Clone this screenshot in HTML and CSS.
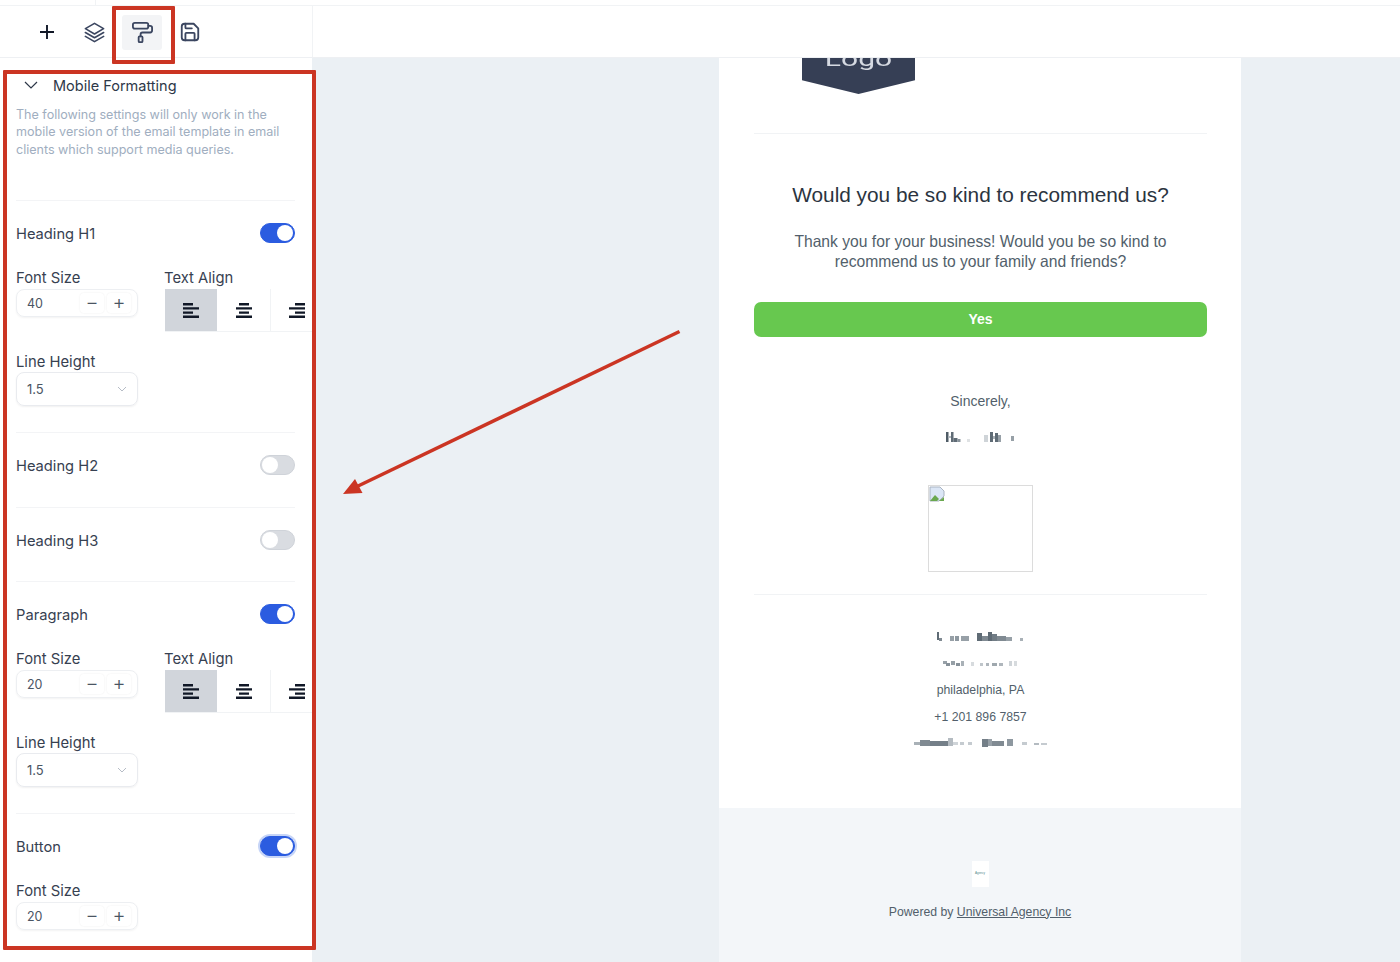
FILE: index.html
```html
<!DOCTYPE html>
<html lang="en">
  <head>
    <meta charset="UTF-8" />
    <meta name="viewport" content="width=device-width, initial-scale=1.0" />
    <title>Mobile Formatting</title>
    <link rel="stylesheet" href="styles.css">
  </head>
  <body>
    <div class="top-strip"><span class="strip-cell"></span></div>

    <header class="topbar">
      <nav class="toolbar">
        <button class="tool tool-plus">
          <svg viewBox="0 0 18 18" width="18" height="18"><path d="M9 2v14M2 9h14" stroke="#111827" stroke-width="1.9" fill="none"/></svg>
        </button>
        <button class="tool">
          <svg viewBox="0 0 24 24" width="23" height="23" fill="none" stroke="#3b4660" stroke-width="1.7" stroke-linejoin="round" stroke-linecap="round"><path d="M12 2.5 21.5 8 12 13.5 2.500 8z"/><path d="M2.500 12 12 17.500 21.500 12"/><path d="M2.500 16 12 21.500 21.500 16"/></svg>
        </button>
        <button class="tool tool-active">
          <svg viewBox="0 0 24 24" width="23" height="23" fill="none" stroke="#3b4660" stroke-width="1.9" stroke-linejoin="round" stroke-linecap="round"><rect x="2" y="2" width="16" height="6" rx="2"/><path d="M10 16v-2a2 2 0 0 1 2-2h8a2 2 0 0 0 2-2V7a2 2 0 0 0-2-2h-2"/><rect x="8" y="16" width="4" height="6" rx="1"/></svg>
        </button>
        <button class="tool">
          <svg viewBox="0 0 24 24" width="22" height="22" fill="none" stroke="#3b4660" stroke-width="2" stroke-linejoin="round" stroke-linecap="round"><path d="M6 3h10l5 5v10a3 3 0 0 1-3 3H6a3 3 0 0 1-3-3V6a3 3 0 0 1 3-3z"/><path d="M7 21v-7a1 1 0 0 1 1-1h8a1 1 0 0 1 1 1v7"/><path d="M7 3v4a1 1 0 0 0 1 1h6"/></svg>
        </button>
      </nav>
    </header>

    <main class="workspace">
      <aside class="sidebar">
        <div class="intro">
          <div class="intro-title">
            <svg viewBox="0 0 14 8" width="14" height="8"><path d="M1 1l6 6 6-6" stroke="#2d3748" stroke-width="1.2" fill="none"/></svg>
            <span>Mobile Formatting</span>
          </div>
          <p class="intro-text">The following settings will only work in the mobile version of the email template in email clients which support media queries.</p>
        </div>

        <section class="setting">
          <div class="setting-row">
            <span class="setting-name">Heading H1</span>
            <span class="toggle toggle-on"></span>
          </div>
          <div class="fields">
            <div class="field">
              <label>Font Size</label>
              <div class="stepper">
                <span class="stepper-value">40</span>
                <span class="step">&minus;</span>
                <span class="step">+</span>
              </div>
            </div>
            <div class="field">
              <label>Text Align</label>
              <div class="align-group">
                <span class="align align-active"><svg viewBox="0 0 16 15" width="16" height="15"><path d="M0 1.200h10M0 5.400h16M0 9.600h10M0 13.800h16"/></svg></span>
                <span class="align"><svg viewBox="0 0 16 15" width="16" height="15"><path d="M3 1.200h10M0 5.400h16M3 9.600h10M0 13.800h16"/></svg></span>
                <span class="align"><svg viewBox="0 0 16 15" width="16" height="15"><path d="M6 1.200h10M0 5.400h16M6 9.600h10M0 13.800h16"/></svg></span>
              </div>
            </div>
            <div class="field">
              <label>Line Height</label>
              <div class="select">
                <span>1.5</span>
                <svg viewBox="0 0 10 6" width="10" height="6"><path d="M1 1l4 4 4-4" stroke="#b6bcc6" stroke-width="1" fill="none"/></svg>
              </div>
            </div>
          </div>
        </section>

        <section class="setting">
          <div class="setting-row">
            <span class="setting-name">Heading H2</span>
            <span class="toggle"></span>
          </div>
        </section>

        <section class="setting">
          <div class="setting-row">
            <span class="setting-name">Heading H3</span>
            <span class="toggle"></span>
          </div>
        </section>

        <section class="setting">
          <div class="setting-row">
            <span class="setting-name">Paragraph</span>
            <span class="toggle toggle-on"></span>
          </div>
          <div class="fields">
            <div class="field">
              <label>Font Size</label>
              <div class="stepper">
                <span class="stepper-value">20</span>
                <span class="step">&minus;</span>
                <span class="step">+</span>
              </div>
            </div>
            <div class="field">
              <label>Text Align</label>
              <div class="align-group">
                <span class="align align-active"><svg viewBox="0 0 16 15" width="16" height="15"><path d="M0 1.200h10M0 5.400h16M0 9.600h10M0 13.800h16"/></svg></span>
                <span class="align"><svg viewBox="0 0 16 15" width="16" height="15"><path d="M3 1.200h10M0 5.400h16M3 9.600h10M0 13.800h16"/></svg></span>
                <span class="align"><svg viewBox="0 0 16 15" width="16" height="15"><path d="M6 1.200h10M0 5.400h16M6 9.600h10M0 13.800h16"/></svg></span>
              </div>
            </div>
            <div class="field">
              <label>Line Height</label>
              <div class="select">
                <span>1.5</span>
                <svg viewBox="0 0 10 6" width="10" height="6"><path d="M1 1l4 4 4-4" stroke="#b6bcc6" stroke-width="1" fill="none"/></svg>
              </div>
            </div>
          </div>
        </section>

        <section class="setting">
          <div class="setting-row">
            <span class="setting-name">Button</span>
            <span class="toggle toggle-on toggle-focus"></span>
          </div>
          <div class="fields">
            <div class="field">
              <label>Font Size</label>
              <div class="stepper">
                <span class="stepper-value">20</span>
                <span class="step">&minus;</span>
                <span class="step">+</span>
              </div>
            </div>
          </div>
        </section>
      </aside>

      <div class="canvas">
        <article class="email">
          <div class="email-body">
            <div class="logo"><span>Logo</span></div>
            <hr class="rule" />
            <h2 class="email-title">Would you be so kind to recommend us?</h2>
            <p class="email-text">Thank you for your business! Would you be so kind to recommend us to your family and friends?</p>
            <a class="yes-button">Yes</a>
            <p class="sign-off">Sincerely,</p>
            <!-- blurred out name -->
            <svg class="redacted redacted-name" viewBox="0 0 70 12" width="70" height="12">
              <rect x="0" y="1" width="2.500" height="10" fill="#4f5c66"/><rect x="2.500" y="5" width="2.500" height="2" fill="#b4bbc1"/><rect x="5" y="1" width="2.500" height="10" fill="#5f6b75"/><rect x="7.500" y="7" width="4" height="4" fill="#5f6b75"/><rect x="11.500" y="8" width="3" height="3" fill="#8a949c"/><rect x="21" y="8" width="3" height="3" fill="#dfe2e4"/><rect x="38" y="4" width="4" height="7" fill="#cfd4d8"/><rect x="44" y="1" width="3" height="10" fill="#5f6b75"/><rect x="47" y="5" width="2" height="3" fill="#a9b1b7"/><rect x="49" y="2" width="3" height="9" fill="#5f6b75"/><rect x="52" y="4" width="3" height="7" fill="#97a0a7"/><rect x="65" y="5" width="3" height="5" fill="#97a0a7"/>
            </svg>
            <div class="image-box">
              <svg viewBox="0 0 16 16" width="16" height="16"><path d="M1 1h10l4 4v5l-5 5H1z" fill="#dbe6f6" stroke="#aab4c2" stroke-width="1"/><path d="M1 15l5-6 4 4-2 2z" fill="#6aa84f"/><path d="M15 11l-5 4h5z" fill="#6aa84f"/></svg>
            </div>
            <hr class="rule rule-lower" />
            <div class="contact">
              <!-- blurred out company + street -->
              <svg class="redacted" viewBox="0 0 90 12" width="90" height="12">
                <rect x="1" y="1" width="2" height="8" fill="#5f6b75"/><rect x="3" y="7" width="3" height="3" fill="#808a92"/><rect x="14" y="5" width="4" height="5" fill="#97a0a7"/><rect x="19" y="5" width="4" height="5" fill="#8e98a0"/><rect x="25" y="5" width="8" height="5" fill="#97a0a7"/><rect x="41" y="2" width="5" height="8" fill="#5f6b75"/><rect x="46" y="5" width="6" height="5" fill="#808a92"/><rect x="52" y="1" width="4" height="9" fill="#5f6b75"/><rect x="56" y="3" width="5" height="7" fill="#717c85"/><rect x="61" y="5" width="9" height="5" fill="#808a92"/><rect x="70" y="6" width="6" height="4" fill="#97a0a7"/><rect x="84" y="7" width="3" height="3" fill="#a9b1b7"/>
              </svg>
              <svg class="redacted" viewBox="0 0 76 12" width="76" height="12">
                <rect x="0" y="3" width="4" height="3" fill="#98a1a8"/><rect x="3" y="5" width="4" height="3" fill="#88929a"/><rect x="8" y="3" width="4" height="4" fill="#97a0a7"/><rect x="13" y="5" width="4" height="3" fill="#88929a"/><rect x="18" y="3" width="3" height="5" fill="#a9b1b7"/><rect x="28" y="4" width="3" height="4" fill="#d7dbde"/><rect x="37" y="5" width="3" height="3" fill="#bfc5ca"/><rect x="43" y="5" width="3" height="3" fill="#afb6bc"/><rect x="49" y="5" width="5" height="3" fill="#9fa8ae"/><rect x="56" y="5" width="4" height="3" fill="#afb6bc"/><rect x="66" y="3" width="3" height="5" fill="#cfd4d8"/><rect x="71" y="3" width="3" height="5" fill="#d7dbde"/>
              </svg>
              <span class="contact-line">philadelphia, PA</span>
              <span class="contact-line">+1 201 896 7857</span>
              <svg class="redacted" viewBox="0 0 134 12" width="134" height="12">
                <rect x="0" y="5" width="8" height="3" fill="#a9b1b7"/><rect x="6" y="3" width="10" height="6" fill="#808a92"/><rect x="16" y="4" width="18" height="5" fill="#747f88"/><rect x="34" y="1" width="5" height="8" fill="#b4bbc1"/><rect x="39" y="5" width="5" height="3" fill="#cfd4d8"/><rect x="46" y="5" width="4" height="3" fill="#c5cbd0"/><rect x="54" y="5" width="4" height="3" fill="#c5cbd0"/><rect x="68" y="2" width="6" height="8" fill="#747f88"/><rect x="74" y="2" width="4" height="7" fill="#97a0a7"/><rect x="78" y="4" width="12" height="5" fill="#808a92"/><rect x="93" y="2" width="6" height="7" fill="#8e98a0"/><rect x="108" y="5" width="5" height="3" fill="#c5cbd0"/><rect x="120" y="6" width="5" height="2" fill="#b4bbc1"/><rect x="127" y="6" width="6" height="2" fill="#c5cbd0"/>
              </svg>
            </div>
          </div>
          <footer class="email-footer">
            <div class="footer-logo"><span>Agency</span></div>
            <p class="powered">Powered by <a>Universal Agency Inc</a></p>
          </footer>
        </article>
      </div>
    </main>

    <!-- annotations drawn over the screenshot -->
    <div class="mark mark-tool"></div>
    <div class="mark mark-panel"></div>
    <svg class="mark-arrow" viewBox="0 0 1400 962" width="1400" height="962">
      <path d="M679.500 331.500 356 487" stroke="#cb3523" stroke-width="3.500" fill="none"/>
      <path d="M343 494 355 479 362.500 493z" fill="#cb3523"/>
    </svg>
  </body>
</html>
```

FILE: styles.css
```css
* {
  box-sizing: border-box;
  margin: 0;
  padding: 0;
}

body {
  width: 1400px;
  height: 962px;
  overflow: hidden;
  position: relative;
  background: #fff;
  font-family: Inter, "Liberation Sans", sans-serif;
  color: #374151;
}

.top-strip {
  height: 6px;
  border-bottom: 1px solid #f1f3f5;
}

.strip-cell {
  display: block;
  width: 96px;
  height: 5px;
  border-right: 1px solid #f1f3f5;
}

.topbar {
  height: 52px;
  border-bottom: 1px solid #eef0f3;
}

.toolbar {
  width: 313px;
  height: 51px;
  display: flex;
  align-items: center;
  padding: 1px 0 0 26px;
  gap: 8px;
  border-right: 1px solid #f1f3f5;
}

.tool {
  width: 40px;
  height: 35px;
  padding: 0;
  border: none;
  border-radius: 3px;
  background: transparent;
  display: flex;
  align-items: center;
  justify-content: center;
}

.tool-plus svg,
.tool-active svg {
  margin-left: 1px;
}

.tool-active {
  background: #f3f4f6;
}

.workspace {
  display: flex;
  height: 904px;
}

.sidebar {
  width: 312px;
  flex: none;
  overflow: hidden;
  background: #fff;
}

.intro {
  padding: 17px 16px 0;
  height: 142px;
}

.intro-title {
  display: flex;
  align-items: center;
  height: 20px;
  padding-left: 8px;
  gap: 15px;
  font-size: 14.500px;
  color: #2d3748;
}

.intro-text {
  margin-top: 10.500px;
  font-size: 12.550px;
  line-height: 17.500px;
  color: #a0aec0;
}

.setting {
  margin-left: 16px;
  width: 279px;
  padding: 22px 0 31.500px;
  border-top: 1px solid #f3f4f6;
}

.setting:has(.fields) {
  padding-bottom: 26px;
}

.setting-row {
  display: flex;
  justify-content: space-between;
  align-items: center;
  height: 20px;
}

.setting-name {
  padding-top: 2px;
  font-size: 14.700px;
  color: #374151;
}

.toggle {
  width: 35px;
  height: 20px;
  border-radius: 10px;
  background: #d9dce1;
  border: 1px solid #cfd3d9;
  position: relative;
}

.toggle::after {
  content: "";
  position: absolute;
  left: 1px;
  top: 1px;
  width: 16px;
  height: 16px;
  border-radius: 50%;
  background: #fff;
}

.toggle-on {
  background: #2b5ce0;
  border-color: #2b5ce0;
}

.toggle-on::after {
  left: 16px;
}

.toggle-focus {
  box-shadow: 0 0 0 2px #c7d5f7;
}

.fields {
  margin-top: 25px;
  display: grid;
  grid-template-columns: 122px 200px;
  column-gap: 27px;
  row-gap: 20px;
}

.field label {
  display: block;
  height: 18px;
  line-height: 20px;
  margin-bottom: 3px;
  font-size: 14.800px;
  color: #374151;
}

.field:nth-child(2) label {
  margin-left: -1px;
}

.stepper {
  height: 28px;
  display: flex;
  align-items: center;
  gap: 3px;
  padding: 0 6px 0 10px;
  border: 1px solid #edeff2;
  border-radius: 8px;
  box-shadow: 0 1px 2px rgba(0, 0, 0, 0.05);
  font-size: 12.500px;
  color: #4b5563;
}

.stepper-value {
  flex: 1;
}

.step {
  width: 24px;
  height: 20px;
  line-height: 19px;
  text-align: center;
  font-size: 20px;
  font-weight: 300;
  border-radius: 4px;
  box-shadow: 0 0 2px rgba(0, 0, 0, 0.08);
  color: #4b5563;
}

.align-group {
  display: flex;
  height: 43px;
  border-bottom: 1px solid #f1f3f5;
}

.align {
  width: 53px;
  flex: none;
  display: flex;
  align-items: center;
  justify-content: center;
  border-right: 1px solid #f1f3f5;
}

.align svg {
  fill: none;
  stroke: #111827;
  stroke-width: 2.400;
}

.align-active {
  background: #d1d5db;
  border-right-color: #fff;
}

.select {
  height: 34px;
  margin-top: -1px;
  display: flex;
  align-items: center;
  justify-content: space-between;
  padding: 0 10px;
  border: 1px solid #e9ebef;
  border-radius: 8px;
  box-shadow: 0 1px 2px rgba(0, 0, 0, 0.06);
  font-size: 13px;
  color: #4b5563;
}

.canvas {
  flex: 1;
  background: #ebf0f4;
  overflow: hidden;
}

.email {
  width: 522px;
  height: 904px;
  margin-left: 407px;
  background: #fff;
  font-family: "Liberation Sans", Arial, sans-serif;
  color: #525f6b;
  display: flex;
  flex-direction: column;
}

.email-body {
  padding: 0 34px 0 35px;
  text-align: center;
}

.logo {
  width: 113px;
  height: 36px;
  margin: 0 0 39px 48px;
  background: #363f55;
  clip-path: polygon(0 0, 100% 0, 100% 62%, 50% 100%, 0 62%);
  color: #d6dae2;
  font-family: Roboto, sans-serif;
  font-size: 20px;
  overflow: hidden;
}

.logo span {
  display: block;
  line-height: 0;
  margin-top: 1px;
  transform: scaleX(1.5);
}

.rule {
  border: none;
  border-top: 1px solid #f1f3f5;
}

.email-title {
  margin-top: 49px;
  font-size: 20.800px;
  line-height: 24px;
  font-weight: 400;
  color: #2b3440;
}

.email-text {
  margin: 25px auto 0;
  width: 400px;
  font-size: 15.660px;
  line-height: 19.500px;
}

.yes-button {
  display: block;
  margin-top: 31px;
  height: 35px;
  line-height: 34px;
  border-radius: 7px;
  background: #67c84f;
  color: #fff;
  font-size: 14px;
  font-weight: 700;
}

.sign-off {
  margin-top: 55px;
  font-size: 14px;
  line-height: 18px;
}

.redacted {
  display: block;
  margin: 0 auto;
  filter: blur(0.7px);
}

.redacted-name {
  margin-top: 21px;
}

.image-box {
  width: 105px;
  height: 87px;
  margin: 42px auto 0;
  border: 1px solid #dcdcdc;
  display: flex;
}

.rule-lower {
  margin-top: 22px;
}

.contact {
  display: grid;
  grid-auto-rows: 26.500px;
  justify-items: center;
  align-items: center;
  margin-top: 29px;
  font-size: 12.250px;
}

.email-footer {
  flex: 1;
  margin-top: 51px;
  padding-top: 53px;
  background: #f3f6f9;
  text-align: center;
}

.footer-logo {
  width: 17px;
  height: 26px;
  margin: 0 auto;
  background: #fff;
  font-size: 3px;
  line-height: 24px;
  color: #4f8a8b;
  overflow: hidden;
}

.powered {
  margin-top: 17px;
  font-size: 12.250px;
  line-height: 16px;
}

.powered a {
  text-decoration: underline;
}

.mark {
  position: absolute;
  border: 4px solid #cb3523;
  border-radius: 1px;
}

.mark-tool {
  left: 112px;
  top: 6px;
  width: 63px;
  height: 58px;
}

.mark-panel {
  left: 3px;
  top: 70px;
  width: 313px;
  height: 880px;
}

.mark-arrow {
  position: absolute;
  left: 0;
  top: 0;
  pointer-events: none;
}
```
